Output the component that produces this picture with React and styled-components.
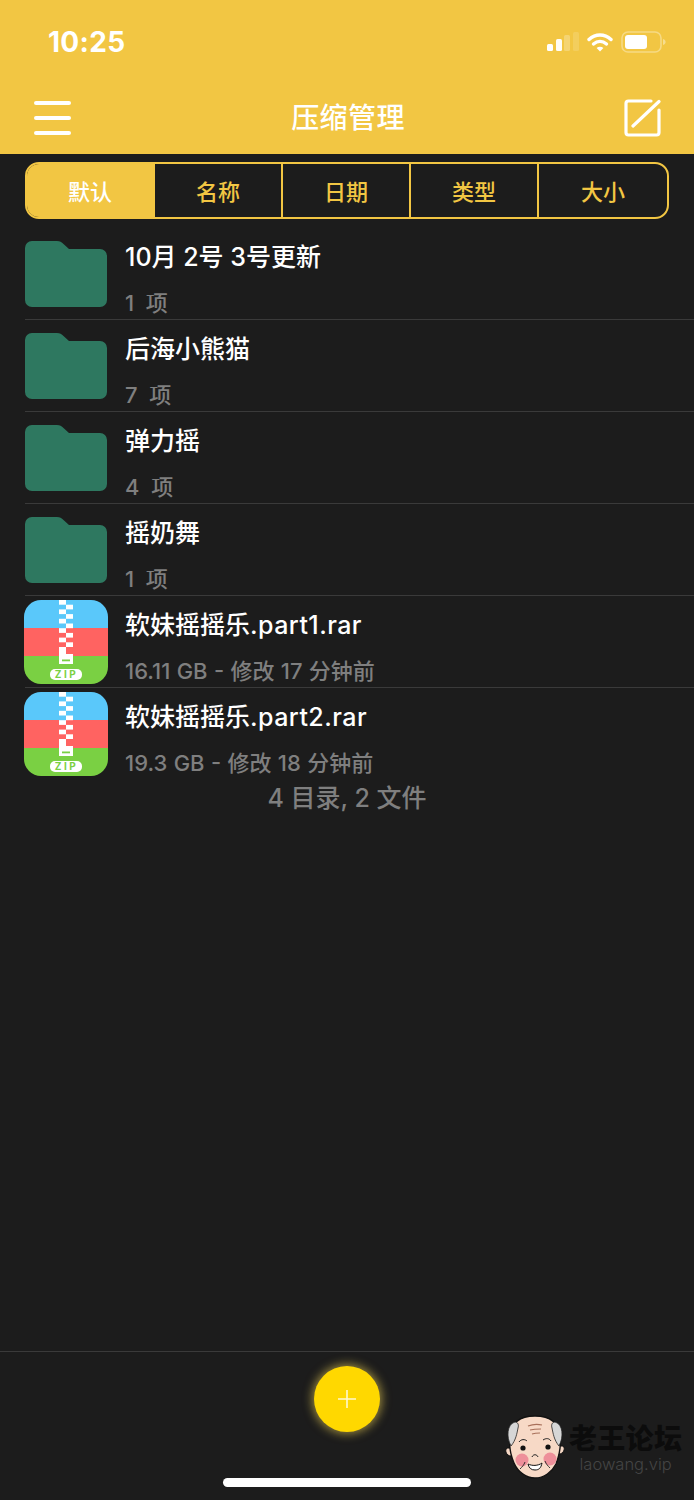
import React from 'react'
import styled, { createGlobalStyle } from 'styled-components'

const YELLOW = '#f2c643'
const BG = '#1c1c1c'
const FONT = 'Inter, "Noto Sans CJK SC", sans-serif'

const Global = createGlobalStyle`
  html, body { margin: 0; padding: 0; background: ${BG}; }
  * { box-sizing: border-box; }
`

const Page = styled.div`
  position: relative;
  width: 694px;
  height: 1500px;
  overflow: hidden;
  display: flex;
  flex-direction: column;
  background: ${BG};
  font-family: ${FONT};
`

const Header = styled.header`
  height: 154px;
  flex: none;
  background: ${YELLOW};
  display: flex;
  flex-direction: column;
`

const StatusBar = styled.div`
  height: 82px;
  padding: 2px 28px 0 48px;
  display: flex;
  align-items: center;
  justify-content: space-between;
`

const Clock = styled.span`
  color: #fff;
  font-size: 28px;
  font-weight: 700;
  letter-spacing: 0.3px;
`

const StatusIcons = styled.div`
  display: flex;
  align-items: center;
  gap: 8px;
`

const NavBar = styled.div`
  flex: 1;
  padding: 0 33px 1px 34px;
  display: flex;
  align-items: center;
  justify-content: space-between;
`

const Title = styled.h1`
  margin: 0;
  color: #fff;
  font-size: 28px;
  font-weight: 500;
  line-height: 1;
  letter-spacing: 0.4px;
`

const Tabs = styled.nav`
  margin: 8px 25px 0;
  height: 57px;
  flex: none;
  display: grid;
  grid-template-columns: repeat(5, 1fr);
  border: 2px solid ${YELLOW};
  border-radius: 14px;
  overflow: hidden;
`

const Tab = styled.div`
  display: flex;
  align-items: center;
  justify-content: center;
  font-size: 22px;
  font-weight: 500;
  padding-bottom: 2px;
  color: ${p => (p.$active ? '#fff' : YELLOW)};
  background: ${p => (p.$active ? YELLOW : 'transparent')};
  &:not(:last-child) { border-right: 2px solid ${YELLOW}; }
`

const List = styled.main`
  flex: 1;
  margin-top: 9px;
  display: flex;
  flex-direction: column;
`

const Row = styled.div`
  height: 92px;
  flex: none;
  margin-left: 25px;
  display: flex;
  border-bottom: ${p => (p.$last ? 'none' : '1px solid #3a3a3a')};
`

const IconSlot = styled.div`
  width: 100px;
  flex: none;
  display: flex;
  align-items: center;
  margin-left: ${p => (p.$zip ? '-1px' : '0')};
  margin-right: ${p => (p.$zip ? '1px' : '0')};
`

const Info = styled.div`
  display: flex;
  flex-direction: column;
  padding-top: 11px;
`

const Name = styled.div`
  color: #fff;
  font-size: 25px;
  font-weight: 500;
  line-height: 36px;
  height: 36px;
  white-space: pre;
`

const Ext = styled.span`
  letter-spacing: 0.45px;
`

const Meta = styled.div`
  color: #7f7f7f;
  margin-top: 13px;
  font-size: 22px;
  font-weight: 500;
  line-height: 30px;
  white-space: pre;
  word-spacing: ${p => (p.$file ? '0.5px' : '0')};
`

const Summary = styled.div`
  text-align: center;
  color: #7f7f7f;
  font-size: 25px;
  font-weight: 500;
  line-height: 36px;
`

const Footer = styled.footer`
  height: 149px;
  flex: none;
  border-top: 1px solid #3a3a3a;
  display: flex;
  flex-direction: column;
  align-items: center;
  padding-top: 14px;
`

const Fab = styled.button`
  width: 66px;
  height: 66px;
  padding: 0;
  border: none;
  border-radius: 50%;
  background: #ffd800;
  box-shadow: 0 0 10px 2px rgba(255, 224, 90, 0.55);
  display: flex;
  align-items: center;
  justify-content: center;
`

const HomeBar = styled.div`
  width: 248px;
  height: 9px;
  margin-top: 46px;
  border-radius: 5px;
  background: #fff;
`

const Watermark = styled.div`
  position: absolute;
  left: 504px;
  top: 1415px;
  display: flex;
  gap: 3px;
`

const MarkText = styled.div`
  display: flex;
  flex-direction: column;
  align-items: center;
  padding-top: 7px;
`

const MarkTitle = styled.div`
  color: #0c0c0c;
  font-size: 28px;
  font-weight: 900;
  line-height: 34px;
  letter-spacing: 0.3px;
  white-space: nowrap;
`

const MarkSub = styled.div`
  color: #444;
  font-size: 16.500px;
  font-weight: 300;
  line-height: 22px;
  margin-top: -3px;
`

const Signal = () => (
  <svg width="32" height="22" viewBox="0 0 32 22">
    <rect x="0" y="13" width="6" height="7" rx="1.500" fill="#fff" />
    <rect x="9" y="8" width="6" height="12" rx="1.500" fill="#fff" opacity="0.95" />
    <rect x="17" y="4" width="6" height="16" rx="1.500" fill="#fff" opacity="0.25" />
    <rect x="26" y="1" width="6" height="19" rx="1.500" fill="#fff" opacity="0.14" />
  </svg>
)

const Wifi = () => (
  <svg width="26" height="20" viewBox="0 0 26 20" fill="none" stroke="#fff" strokeWidth="3.400" strokeLinecap="round">
    <path d="M2 7.500C8.500 1.400 17.500 1.400 24 7.500" />
    <path d="M6.500 12C10.500 8.600 15.500 8.600 19.500 12" />
    <path d="M13 19.500l-3.400-3.600c1.900-1.600 4.900-1.600 6.800 0z" fill="#fff" stroke="none" />
  </svg>
)

const Battery = () => (
  <svg width="45" height="22" viewBox="0 0 45 22">
    <rect x="1" y="1" width="39" height="20" rx="6" fill="none" stroke="#fff" strokeOpacity="0.35" strokeWidth="1.600" />
    <rect x="4" y="4" width="22" height="14" rx="3" fill="#fff" />
    <path d="M42 8c1.800.5 2.600 1.600 2.600 3s-.8 2.500-2.600 3z" fill="#fff" opacity="0.4" />
  </svg>
)

const Menu = () => (
  <svg width="38" height="36" viewBox="0 0 38 36" fill="#fff">
    <rect x="0" y="1" width="37" height="4" rx="2" />
    <rect x="0" y="16" width="37" height="4" rx="2" />
    <rect x="0" y="31" width="37" height="4" rx="2" />
  </svg>
)

const Compose = () => (
  <svg width="37" height="38" viewBox="0 0 37 38" fill="none" stroke="#fff" strokeWidth="3.200" strokeLinecap="round" strokeLinejoin="round">
    <path d="M27 2H4.500A2.500 2.500 0 0 0 2 4.500v29A2.500 2.500 0 0 0 4.500 36h28a2.500 2.500 0 0 0 2.500-2.500V11" />
    <path d="M35 2.500L9 27" />
  </svg>
)

const Folder = () => (
  <svg width="82" height="66" viewBox="0 0 82 66">
    <path
      d="M7 0H32c3 0 4.500 1 6.500 3L44 8H75a7 7 0 0 1 7 7V59a7 7 0 0 1-7 7H7a7 7 0 0 1-7-7V7a7 7 0 0 1 7-7z"
      fill="#2e7860"
    />
  </svg>
)

const zipRows = [0, 1, 2, 3, 4, 5, 6, 7, 8, 9, 10]

const ZipIcon = ({ id }) => (
  <svg width="84" height="84" viewBox="0 0 84 84">
    <defs>
      <clipPath id={id}>
        <rect width="84" height="84" rx="17" />
      </clipPath>
    </defs>
    <g clipPath={`url(#${id})`}>
      <rect width="84" height="28" fill="#5ac8fa" />
      <rect y="28" width="84" height="28" fill="#ff6361" />
      <rect y="56" width="84" height="28" fill="#7ad043" />
      <rect x="35" width="14" height="48" fill="#fff" />
      {zipRows.map(i => (
        <rect
          key={i}
          x={i % 2 ? 35 : 42}
          y={i * 4.700}
          width="7"
          height="4.700"
          fill={i * 4.700 < 27 ? '#5ac8fa' : '#ff6361'}
        />
      ))}
      <rect x="35" y="48" width="7" height="16" fill="#fff" />
      <rect x="35" y="54" width="14" height="10" fill="#fff" />
      <rect x="38" y="59.500" width="8" height="1.800" fill="#7ad043" />
      <rect x="26" y="69" width="32" height="11" rx="5" fill="#fff" />
      <text x="42.500" y="78.200" textAnchor="middle" fontSize="10" fontWeight="700" letterSpacing="2.500" fontFamily="Inter, sans-serif" fill="#7ad043">ZIP</text>
    </g>
  </svg>
)

const OldMan = () => (
  <svg width="62" height="64" viewBox="0 0 62 64">
    <path d="M3 33c-3 3 0 8 4 8l3 0 0-8z" fill="#f7d9c6" stroke="#111" strokeWidth="1" />
    <path d="M59 31c3 3 0 8-4 8l-3 0 0-8z" fill="#f7d9c6" stroke="#111" strokeWidth="1" />
    <path
      d="M31 1C16 1 7 8 6 22c-1 8 1 19 4 26 4 9 12 15 21 15s17-6 21-14c3-8 5-19 4-27C55 8 46 1 31 1z"
      fill="#f7d9c6"
      stroke="#111"
      strokeWidth="1.400"
    />
    <path d="M7 31C2 22 3 9 11 7c3 0 4 3 3 6-1 5-2 12-7 18z" fill="#d6d6d6" stroke="#222" strokeWidth="0.800" />
    <path d="M55 31c5-9 4-22-4-24-3 0-4 3-3 6 1 5 2 12 7 18z" fill="#d6d6d6" stroke="#222" strokeWidth="0.800" />
    <path d="M24 11c5-2 10-2 14-1M26 15c4-1 7-1 11-1M28 19c3-1 5-1 8-1" stroke="#a8705a" strokeWidth="1.200" fill="none" />
    <path d="M15 27c2-3 6-3 8-1M39 25c3-2 6-2 8 1" stroke="#222" strokeWidth="1" fill="none" />
    <circle cx="19" cy="33" r="2.600" fill="#111" />
    <circle cx="44" cy="32" r="2.600" fill="#111" />
    <circle cx="18" cy="45" r="6.500" fill="#ee8f9a" />
    <circle cx="46" cy="44" r="6.500" fill="#ee8f9a" />
    <path d="M28 42c1-3 5-3 6 0" stroke="#222" strokeWidth="1" fill="none" />
    <path d="M24 49c4 2 10 2 14-1-1 5-3 7-7 7s-6-2-7-6z" fill="#fff" stroke="#111" strokeWidth="1" />
    <path d="M21 47c-1 3-3 5-5 7M41 46c1 3 3 5 5 7" stroke="#222" strokeWidth="0.900" fill="none" />
  </svg>
)

const tabs = ['默认', '名称', '日期', '类型', '大小']

const items = [
  { name: '10月 2号 3号更新', meta: '1  项' },
  { name: '后海小熊猫', meta: '7  项' },
  { name: '弹力摇', meta: '4  项' },
  { name: '摇奶舞', meta: '1  项' },
  { name: '软妹摇摇乐', ext: '.part1.rar', meta: '16.11 GB - 修改 17 分钟前', zip: true },
  { name: '软妹摇摇乐', ext: '.part2.rar', meta: '19.3 GB - 修改 18 分钟前', zip: true, last: true },
]

export default function App() {
  return (
    <Page>
      <Global />
      <Header>
        <StatusBar>
          <Clock>10:25</Clock>
          <StatusIcons>
            <Signal />
            <Wifi />
            <Battery />
          </StatusIcons>
        </StatusBar>
        <NavBar>
          <Menu />
          <Title>压缩管理</Title>
          <Compose />
        </NavBar>
      </Header>
      <Tabs>
        {tabs.map((t, i) => (
          <Tab key={t} $active={i === 0}>{t}</Tab>
        ))}
      </Tabs>
      <List>
        {items.map((item, i) => (
          <Row key={item.name + i} $last={item.last}>
            <IconSlot $zip={item.zip}>
              {item.zip ? <ZipIcon id={`zip-${i}`} /> : <Folder />}
            </IconSlot>
            <Info>
              <Name>{item.name}{item.ext && <Ext>{item.ext}</Ext>}</Name>
              <Meta $file={item.zip}>{item.meta}</Meta>
            </Info>
          </Row>
        ))}
        <Summary>4 目录, 2 文件</Summary>
      </List>
      <Footer>
        <Fab aria-label="add">
          <svg width="18" height="18" viewBox="0 0 18 18" stroke="#fff8d0" strokeWidth="1.600">
            <path d="M9 0v18M0 9h18" />
          </svg>
        </Fab>
        <HomeBar />
      </Footer>
      <Watermark>
        <OldMan />
        <MarkText>
          <MarkTitle>老王论坛</MarkTitle>
          <MarkSub>laowang.vip</MarkSub>
        </MarkText>
      </Watermark>
    </Page>
  )
}
